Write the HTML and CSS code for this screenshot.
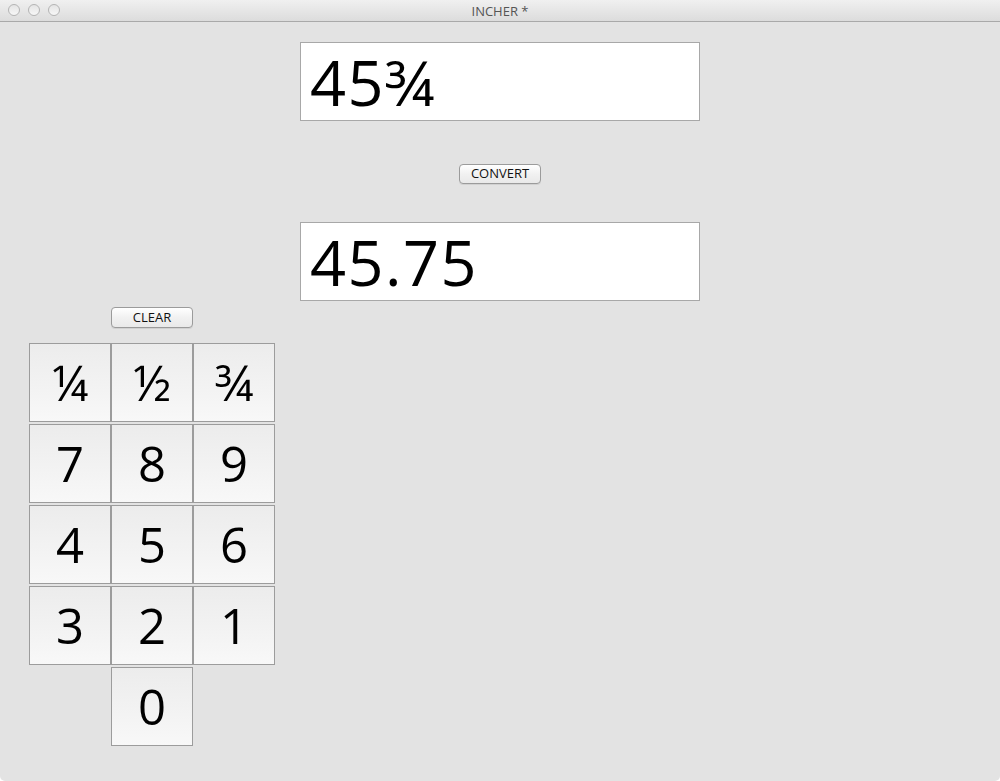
FILE: index.html
```html
<!DOCTYPE html>
<html>
<head>
<meta charset="utf-8">
<title>INCHER *</title>
<link rel="stylesheet" href="styles.css">
</head>
<body>
<div class="window">
  <div class="titlebar">
    <div class="lights">
      <span class="light"></span>
      <span class="light"></span>
      <span class="light"></span>
    </div>
    <div class="title">INCHER *</div>
  </div>
  <div class="content">
    <div class="converter">
      <div class="field">45¾</div>
      <button class="btn convert">CONVERT</button>
      <div class="field result">45.75</div>
    </div>
    <div class="pad-area">
      <div class="clear-row"><button class="btn clear">CLEAR</button></div>
      <div class="keypad">
        <button class="key">¼</button>
        <button class="key">½</button>
        <button class="key">¾</button>
        <button class="key">7</button>
        <button class="key">8</button>
        <button class="key">9</button>
        <button class="key">4</button>
        <button class="key">5</button>
        <button class="key">6</button>
        <button class="key">3</button>
        <button class="key">2</button>
        <button class="key">1</button>
        <button class="key zero">0</button>
      </div>
    </div>
  </div>
</div>
</body>
</html>
```

FILE: styles.css
```css
html, body {
  margin: 0;
  padding: 0;
  background: #ffffff;
}
body {
  font-family: "Open Sans", "DejaVu Sans", sans-serif;
}
.window {
  width: 1000px;
  height: 781px;
  background: #e3e3e3;
  border-radius: 0 0 5px 5px;
  overflow: hidden;
  display: flex;
  flex-direction: column;
}
.titlebar {
  height: 21px;
  border-bottom: 1px solid #a9a9a9;
  background: linear-gradient(#f0f0f0, #dcdcdc);
  display: flex;
  align-items: center;
  justify-content: center;
  position: relative;
}
.lights {
  position: absolute;
  left: 8px;
  top: 4px;
  display: flex;
  gap: 8px;
}
.light {
  width: 10px;
  height: 10px;
  border-radius: 50%;
  border: 1px solid #b4b4b4;
  background: linear-gradient(#e4e4e4, #f7f7f7);
  box-sizing: content-box;
}
.title {
  font-size: 13px;
  color: #555555;
  font-family: "Open Sans", "DejaVu Sans", sans-serif;
}
.content {
  flex: 1;
  display: flex;
  flex-direction: column;
}
.converter {
  display: flex;
  flex-direction: column;
  align-items: center;
  padding-top: 20px;
}
.field {
  width: 400px;
  height: 79px;
  box-sizing: border-box;
  border: 1px solid #a8a8a8;
  background: #ffffff;
  font-family: "Open Sans", sans-serif;
  font-size: 63px;
  line-height: 77px;
  padding-left: 9px;
  letter-spacing: 1.5px;
  color: #000;
  white-space: nowrap;
}
.btn {
  font-family: "Open Sans", sans-serif;
  font-size: 13px;
  color: #111;
  height: 20px;
  width: 82px;
  padding: 0 0 2px 0;
  border: 1px solid #9b9b9b;
  border-radius: 4px;
  background: linear-gradient(#ffffff, #f1f1f1 50%, #e9e9e9);
  box-shadow: 0 1px 0 rgba(0,0,0,0.08);
  line-height: 16px;
}
.convert {
  margin-top: 43px;
  margin-bottom: 38px;
}
.pad-area {
  padding-left: 29px;
  padding-top: 6px;
  display: flex;
  flex-direction: column;
  width: 246px;
}
.clear-row {
  display: flex;
  justify-content: center;
  height: 21px;
}
.clear {
  height: 21px;
}
.keypad {
  margin-top: 15px;
  display: grid;
  grid-template-columns: repeat(3, 82px);
  grid-auto-rows: 80px;
  row-gap: 1px;
}
.key {
  box-sizing: border-box;
  border: 1px solid #9c9c9c;
  background: linear-gradient(#ececec, #f3f3f3 60%, #f8f8f8);
  font-family: "Open Sans", sans-serif;
  font-size: 49px;
  color: #000;
  padding: 0;
  margin: 0;
  line-height: 1;
  height: 79px;
}
.zero {
  grid-column: 2;
}
```
